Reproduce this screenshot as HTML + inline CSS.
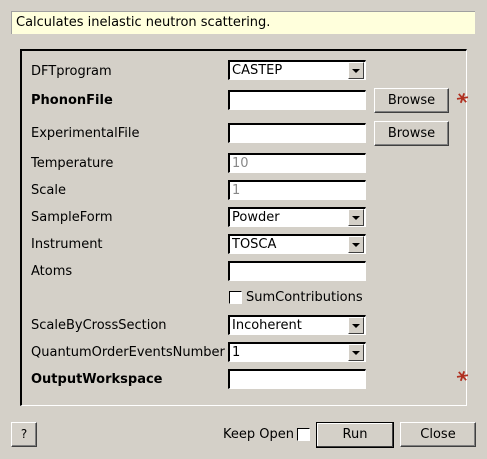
<!DOCTYPE html>
<html><head><style>
body{margin:0;width:487px;height:459px;background:#d4d0c8;font-family:"DejaVu Sans","Liberation Sans",sans-serif;font-size:13px;color:#000;position:relative;overflow:hidden}
.a{position:absolute}
.lbl{position:absolute;left:31px;line-height:15px;margin-top:1px}
.b{font-weight:bold}
.in{position:absolute;left:228px;height:17px;background:#fff;border-top:2px solid #000;border-left:2px solid #000;border-right:1px solid #fff;border-bottom:1px solid #fff;line-height:17px;padding-left:2px;box-sizing:content-box;width:133px}
.arr{position:absolute;right:1px;top:0px;width:16px;height:17px;background:#d4d0c8;border-right:1px solid #404040;border-bottom:1px solid #404040;border-top:1px solid #fff;border-left:1px solid #fff;box-sizing:border-box}
.arr:after{content:"";position:absolute;left:3px;top:6px;border-left:4px solid transparent;border-right:4px solid transparent;border-top:4px solid #000}
.btn{position:absolute;background:#d4d0c8;border:1px solid #fff;border-right-color:#404040;border-bottom-color:#404040;box-shadow:inset -1px -1px 0 #808080;text-align:center;box-sizing:border-box;font-size:13px}
.star{position:absolute;color:#b03020;font-weight:bold;font-size:22px;left:455px;line-height:22px;transform:rotate(20deg)}
</style></head><body>
<div class="a" style="left:11px;top:11px;width:464px;height:23px;background:#ffffdc;border-top:1px solid #a0a0a0;border-left:1px solid #a0a0a0;box-sizing:border-box;padding-left:4px;line-height:21px;font-size:13px">Calculates inelastic neutron scattering.</div>
<div class="a" style="left:20px;top:49px;width:447px;height:357px;border-top:2px solid #000;border-left:2px solid #000;border-right:1px solid #fff;border-bottom:1px solid #fff;box-sizing:border-box"></div>

<div class="lbl" style="top:63px">DFTprogram</div>
<div class="in" style="top:60px">CASTEP<div class="arr"></div></div>
<div class="lbl b" style="top:92px">PhononFile</div>
<div class="in" style="top:90px"></div>
<div class="btn" style="left:374px;top:88px;width:75px;height:25px;line-height:23px">Browse</div>
<div class="star" style="top:92px">*</div>
<div class="lbl" style="top:125px">ExperimentalFile</div>
<div class="in" style="top:123px"></div>
<div class="btn" style="left:374px;top:121px;width:75px;height:25px;line-height:23px">Browse</div>
<div class="lbl" style="top:155px">Temperature</div>
<div class="in" style="top:153px;color:#888">10</div>
<div class="lbl" style="top:182px">Scale</div>
<div class="in" style="top:180px;color:#888">1</div>
<div class="lbl" style="top:209px">SampleForm</div>
<div class="in" style="top:207px">Powder<div class="arr"></div></div>
<div class="lbl" style="top:236px">Instrument</div>
<div class="in" style="top:234px">TOSCA<div class="arr"></div></div>
<div class="lbl" style="top:263px">Atoms</div>
<div class="in" style="top:261px"></div>
<div class="a" style="left:229px;top:291px;width:13px;height:13px;background:#fff;border-top:1px solid #000;border-left:1px solid #000;border-right:1px solid #fff;border-bottom:1px solid #fff;box-sizing:border-box"></div>
<div class="a" style="left:246px;top:290px;line-height:15px">SumContributions</div>
<div class="lbl" style="top:317px">ScaleByCrossSection</div>
<div class="in" style="top:315px">Incoherent<div class="arr"></div></div>
<div class="lbl" style="top:344px">QuantumOrderEventsNumber</div>
<div class="in" style="top:342px">1<div class="arr"></div></div>
<div class="lbl b" style="top:371px">OutputWorkspace</div>
<div class="in" style="top:369px"></div>
<div class="star" style="top:370px">*</div>

<div class="btn" style="left:11px;top:422px;width:26px;height:25px;line-height:23px;font-size:12px">?</div>
<div class="a" style="left:223px;top:427px;font-size:13px;line-height:15px">Keep Open</div>
<div class="a" style="left:297px;top:428px;width:13px;height:13px;background:#fff;border-top:1px solid #000;border-left:1px solid #000;border-right:1px solid #fff;border-bottom:1px solid #fff;box-sizing:border-box"></div>
<div class="btn" style="left:316px;top:422px;width:78px;height:26px;line-height:24px;border:1px solid #000;box-shadow:inset -1px -1px 0 #404040,inset 1px 1px 0 #fff">Run</div>
<div class="btn" style="left:400px;top:422px;width:76px;height:25px;line-height:23px">Close</div>
</body></html>
